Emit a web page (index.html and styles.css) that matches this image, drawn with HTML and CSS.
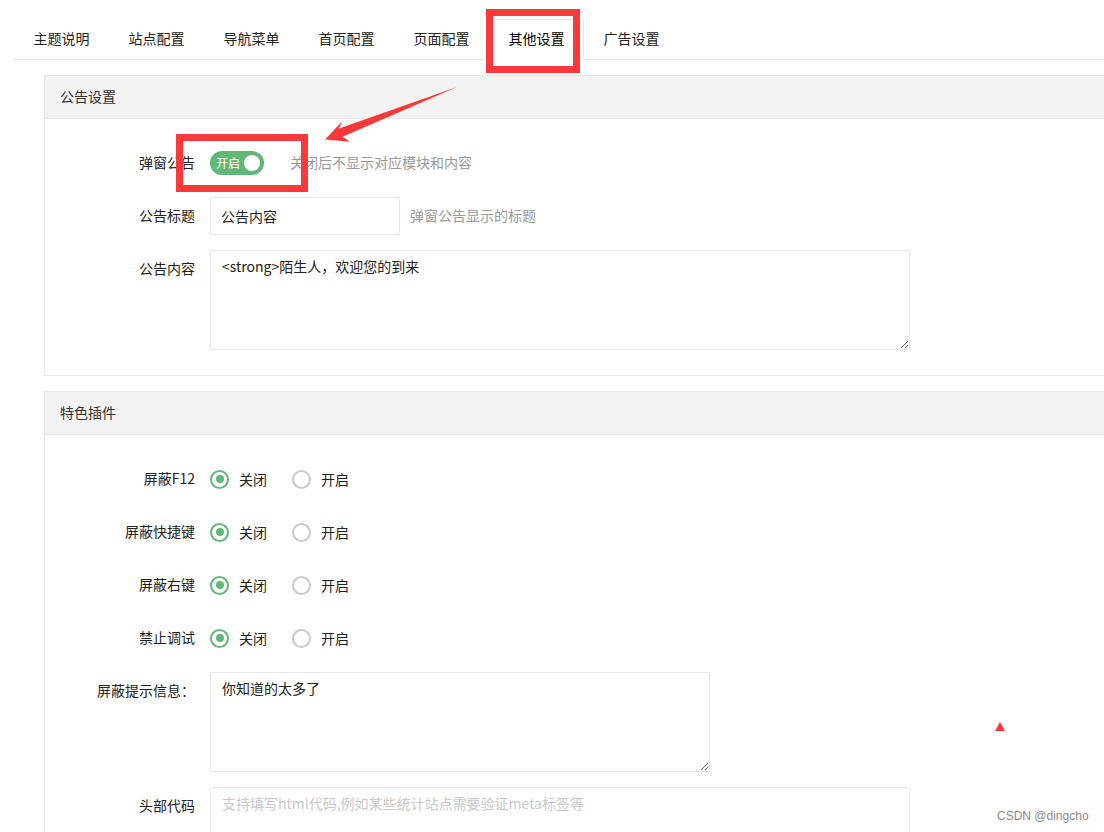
FILE: index.html
```html
<!DOCTYPE html>
<html lang="zh-CN">
<head>
<meta charset="utf-8">
<title>其他设置</title>
<link rel="stylesheet" href="styles.css">
</head>
<body>
<div class="page">
  <div class="tabs">
    <ul class="tab-list">
      <li>主题说明</li>
      <li>站点配置</li>
      <li>导航菜单</li>
      <li>首页配置</li>
      <li>页面配置</li>
      <li class="active">其他设置</li>
      <li>广告设置</li>
    </ul>
  </div>

  <div class="content">
    <div class="panel">
      <div class="panel-head">公告设置</div>
      <div class="panel-body">
        <div class="row">
          <label class="label">弹窗公告</label>
          <div class="ctl">
            <span class="switch"><em>开启</em><i></i></span>
          </div>
          <div class="aux aux-switch">关闭后不显示对应模块和内容</div>
        </div>
        <div class="row">
          <label class="label">公告标题</label>
          <input class="input input-short" type="text" value="公告内容">
          <div class="aux aux-input">弹窗公告显示的标题</div>
        </div>
        <div class="row">
          <label class="label">公告内容</label>
          <textarea class="textarea textarea-wide">&lt;strong&gt;陌生人，欢迎您的到来</textarea>
        </div>
      </div>
    </div>

    <div class="panel">
      <div class="panel-head">特色插件</div>
      <div class="panel-body">
        <div class="row">
          <label class="label">屏蔽F12</label>
          <div class="radios">
            <span class="radio checked"><i></i>关闭</span>
            <span class="radio"><i></i>开启</span>
          </div>
        </div>
        <div class="row">
          <label class="label">屏蔽快捷键</label>
          <div class="radios">
            <span class="radio checked"><i></i>关闭</span>
            <span class="radio"><i></i>开启</span>
          </div>
        </div>
        <div class="row">
          <label class="label">屏蔽右键</label>
          <div class="radios">
            <span class="radio checked"><i></i>关闭</span>
            <span class="radio"><i></i>开启</span>
          </div>
        </div>
        <div class="row">
          <label class="label">禁止调试</label>
          <div class="radios">
            <span class="radio checked"><i></i>关闭</span>
            <span class="radio"><i></i>开启</span>
          </div>
        </div>
        <div class="row">
          <label class="label">屏蔽提示信息：</label>
          <textarea class="textarea textarea-mid">你知道的太多了</textarea>
        </div>
        <div class="row">
          <label class="label">头部代码</label>
          <textarea class="textarea textarea-wide" placeholder="支持填写html代码,例如某些统计站点需要验证meta标签等"></textarea>
        </div>
      </div>
    </div>
  </div>

  <svg class="annot-arrow" width="1104" height="832" viewBox="0 0 1104 832">
    <polygon points="457,87 342.6,136.8 350,141.8 325,139.5 342,121.5 339,128.6" fill="#fa3a3a"/>
  </svg>
  <div class="annot-box box-tab"></div>
  <div class="annot-box box-switch"></div>
  <div class="annot-tri"></div>
  <div class="watermark">CSDN @dingcho</div>
</div>
</body>
</html>
```

FILE: styles.css
```css
html, body {
  margin: 0;
  padding: 0;
  overflow: hidden;
  background: #fff;
}

body {
  font-family: "Noto Sans CJK SC", "Noto Sans", sans-serif;
  font-size: 14px;
  color: #333;
}

.page {
  position: relative;
  width: 1104px;
  height: 832px;
  overflow: hidden;
}

/* tabs */
.tabs {
  margin: 19px 0 0 14px;
  border-bottom: 1px solid #e6e6e6;
}

.tab-list {
  display: flex;
  list-style: none;
  margin: 0;
  padding: 0;
}

.tab-list li {
  box-sizing: border-box;
  width: 95px;
  height: 40px;
  line-height: 39px;
  text-align: center;
  color: #222;
  font-size: 14px;
}

.tab-list li.active {
  border: 1px solid #e6e6e6;
  border-bottom-color: #fff;
  border-radius: 2px 2px 0 0;
  height: 41px;
  line-height: 37px;
  margin-bottom: -1px;
  color: #000;
}

/* content */
.content {
  padding: 15px 0 0 44px;
}

.panel {
  border: 1px solid #e6e6e6;
  border-right: none;
  margin-bottom: 15px;
  margin-right: -20px;
  background: #fff;
}

.panel-head {
  height: 42px;
  line-height: 41px;
  padding: 0 15px;
  background: #f2f2f2;
  border-bottom: 1px solid #e6e6e6;
  color: #333;
}

.panel-body {
  padding: 25px 0 10px;
}

.row {
  display: flex;
  align-items: flex-start;
  margin-bottom: 15px;
  min-height: 38px;
}

.label {
  box-sizing: border-box;
  width: 165px;
  flex: none;
  padding: 8px 15px 10px 0;
  line-height: 20px;
  text-align: right;
  color: #222;
}

.ctl {
  height: 38px;
  display: flex;
  align-items: flex-start;
}

/* switch */
.switch {
  box-sizing: border-box;
  position: relative;
  display: inline-block;
  width: 54px;
  height: 24px;
  margin-top: 7px;
  border-radius: 12px;
  background: #5fb878;
}

.switch em {
  position: absolute;
  left: 6px;
  top: 0;
  font-style: normal;
  font-size: 12px;
  line-height: 23px;
  color: #fff;
}

.switch i {
  position: absolute;
  right: 4px;
  top: 4px;
  width: 16px;
  height: 16px;
  border-radius: 50%;
  background: #fff;
}

.aux {
  padding: 8px 0 10px;
  line-height: 20px;
  color: #999;
}

.aux-switch {
  margin-left: 26px;
}

.aux-input {
  margin-left: 10px;
}

/* inputs */
.input,
.textarea {
  box-sizing: border-box;
  border: 1px solid #e6e6e6;
  border-radius: 2px;
  font-family: "Noto Sans CJK SC", "Noto Sans", sans-serif;
  font-size: 14px;
  color: #222;
  background: #fff;
  outline: none;
  margin: 0;
}

.input {
  height: 38px;
  line-height: 20px;
  padding: 0 10px 1px;
}

.input-short {
  width: 190px;
}

.textarea {
  height: 100px;
  padding: 5px 11px 6px;
  line-height: 20px;
  resize: vertical;
}

.textarea-wide {
  width: 700px;
}

.textarea-mid {
  width: 500px;
}

.textarea::placeholder {
  color: #c8c8c8;
}

/* radios */
.radios {
  height: 38px;
  display: flex;
  align-items: center;
}

.radio {
  display: inline-flex;
  align-items: center;
  margin-right: 25px;
  color: #222;
  line-height: 20px;
}

.radio i {
  box-sizing: border-box;
  width: 19px;
  height: 19px;
  border-radius: 50%;
  border: 2px solid #c9c9c9;
  margin-right: 10px;
  position: relative;
}

.radio.checked i {
  border-color: #5fb878;
}

.radio.checked i::after {
  content: "";
  position: absolute;
  left: 3.5px;
  top: 3.5px;
  width: 8px;
  height: 8px;
  border-radius: 50%;
  background: #5fb878;
}

/* annotations */
.annot-arrow {
  position: absolute;
  left: 0;
  top: 0;
  pointer-events: none;
}

.annot-box {
  position: absolute;
  box-sizing: border-box;
  border: 7px solid #fa3a3a;
  pointer-events: none;
}

.box-tab {
  left: 486px;
  top: 9px;
  width: 94px;
  height: 64px;
}

.box-switch {
  left: 176px;
  top: 134px;
  width: 132px;
  height: 58px;
}

.annot-tri {
  position: absolute;
  left: 995px;
  top: 722px;
  width: 0;
  height: 0;
  border-left: 5px solid transparent;
  border-right: 5px solid transparent;
  border-bottom: 9px solid #fa3a3a;
}

.watermark {
  position: absolute;
  left: 997px;
  top: 807px;
  font-family: "Liberation Sans", "Noto Sans", sans-serif;
  font-size: 12px;
  line-height: 18px;
  color: #8a8a8a;
}
```
